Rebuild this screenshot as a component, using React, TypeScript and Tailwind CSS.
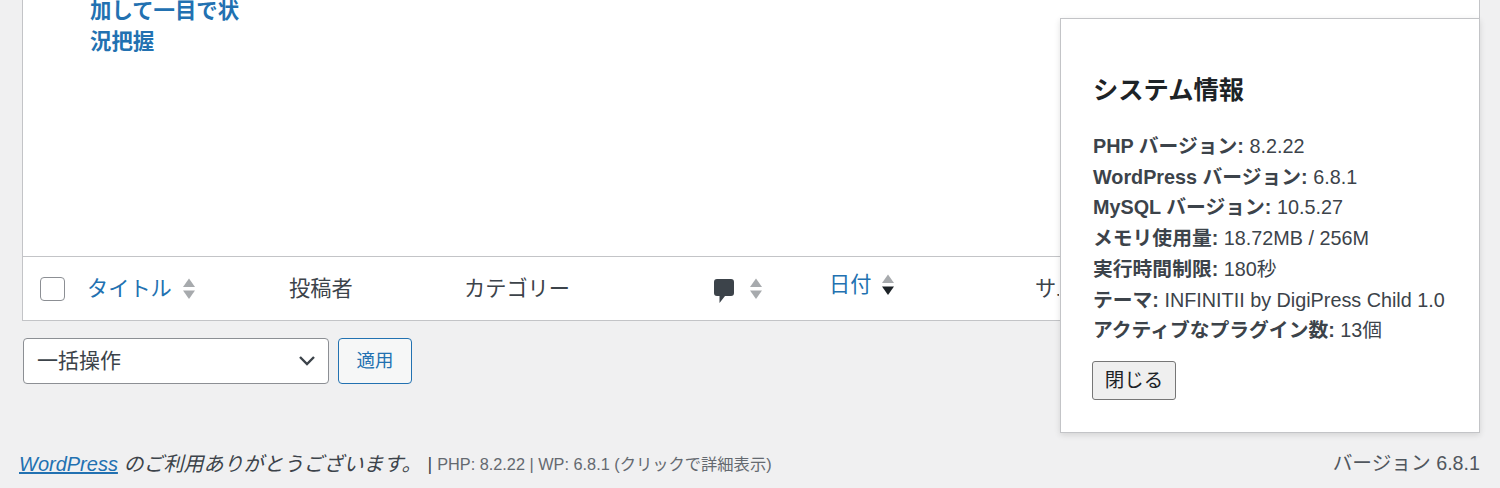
const font = "font-['Liberation_Sans','Noto_Sans_CJK_JP',sans-serif]";

function Sort({ active = false }: { active?: boolean }) {
  return (
    <svg width="14" height="24" viewBox="0 0 14 24" className="shrink-0">
      <path d="M7 1.5 L13 10 H1 Z" fill="#a7aaad" />
      <path d="M7 22 L13 13.5 H1 Z" fill={active ? "#1d2327" : "#a7aaad"} />
    </svg>
  );
}

export default function App() {
  return (
    <div className={`${font} relative h-[488px] w-[1500px] overflow-hidden bg-[#f0f0f1] text-[#3c434a]`}>
      <div className="ml-[22px] flex h-[321px] w-[1458px] flex-col border-x border-b border-[#c3c4c7] bg-white">
        <div className="h-[257px] shrink-0 border-b border-[#c3c4c7] pl-[67px]">
          <div className="-mt-[4px] w-[160px] text-[21.4px] font-bold leading-[31px] text-[#2271b1]">
            加して一目で状<br />況把握
          </div>
        </div>
        <div className="flex h-[63px] items-center whitespace-nowrap pt-[1px] text-[21.2px]">
          <span className="ml-[17px] h-[24px] w-[25px] shrink-0 rounded-[4px] border border-[#8c8f94] bg-white" />
          <div className="ml-[22px] flex w-[202px] items-center gap-[10px] text-[#2271b1]">
            <span>タイトル</span>
            <Sort />
          </div>
          <div className="w-[175px]">投稿者</div>
          <div className="w-[249px]">カテゴリー</div>
          <div className="flex w-[116px] items-center gap-[14px]">
            <svg width="22" height="26" viewBox="0 0 22 26" className="mt-[3px] shrink-0">
              <path d="M4 1 H18 Q21 1 21 4 V15 Q21 18 18 18 H12 L6.5 25 V18 H4 Q1 18 1 15 V4 Q1 1 4 1 Z" fill="#3c434a" />
            </svg>
            <Sort />
          </div>
          <div className="-mt-[8px] flex w-[206px] items-center gap-[10px] text-[#2271b1]">
            <span>日付</span>
            <Sort active />
          </div>
          <div className="w-[24px] overflow-hidden">サムネイル</div>
        </div>
      </div>

      <div className="ml-[23px] mt-[17px] flex gap-[9px]">
        <div className="flex h-[46px] w-[306px] items-center justify-between rounded-[4px] border border-[#8c8f94] bg-white pl-[13px] pr-[12px] text-[21px]">
          <span>一括操作</span>
          <svg width="18" height="12" viewBox="0 0 18 12">
            <path d="M2 2 L9 9 L16 2" fill="none" stroke="#3c434a" strokeWidth="2.4" />
          </svg>
        </div>
        <button className="h-[46px] w-[74px] rounded-[4px] border-[1.5px] border-[#2271b1] bg-[#f6f7f7] text-[18.5px] text-[#2271b1]">
          適用
        </button>
      </div>

      <div className="absolute bottom-[9px] left-[19px] right-[20px] flex items-center justify-between">
        <div className="flex items-center whitespace-nowrap">
          <span className="text-[20px] italic leading-[28px]">
            <a className="text-[#2271b1] underline">WordPress</a> のご利用ありがとうございます。
          </span>
          <span className="ml-[6px] text-[16.3px] text-[#646970]">
            <span className="mr-[5px] text-[18px] text-[#3c434a]">|</span>PHP: 8.2.22 | WP: 6.8.1 (クリックで詳細表示)
          </span>
        </div>
        <div className="text-[19.7px] text-[#50575e]">バージョン 6.8.1</div>
      </div>

      <div className="absolute left-[1060px] top-[18px] h-[415px] w-[420px] border border-[#c3c4c7] bg-white pl-[32px] pt-[53px] shadow-[0_2px_6px_rgba(0,0,0,0.12)]">
        <h2 className="text-[25.3px] font-bold leading-[36px] text-[#1d2327]">システム情報</h2>
        <div className="mt-[23px] whitespace-nowrap text-[19.8px] leading-[30.7px]">
          <div><b>PHP バージョン:</b> 8.2.22</div>
          <div><b>WordPress バージョン:</b> 6.8.1</div>
          <div><b>MySQL バージョン:</b> 10.5.27</div>
          <div><b>メモリ使用量:</b> 18.72MB / 256M</div>
          <div><b>実行時間制限:</b> 180秒</div>
          <div><b>テーマ:</b> INFINITII by DigiPress Child 1.0</div>
          <div><b>アクティブなプラグイン数:</b> 13個</div>
        </div>
        <button className="-ml-[1px] mt-[15px] h-[39px] w-[84px] rounded-[3px] border border-[#767676] bg-[#efefef] text-[19.5px] text-[#1d2327]">
          閉じる
        </button>
      </div>
    </div>
  );
}
